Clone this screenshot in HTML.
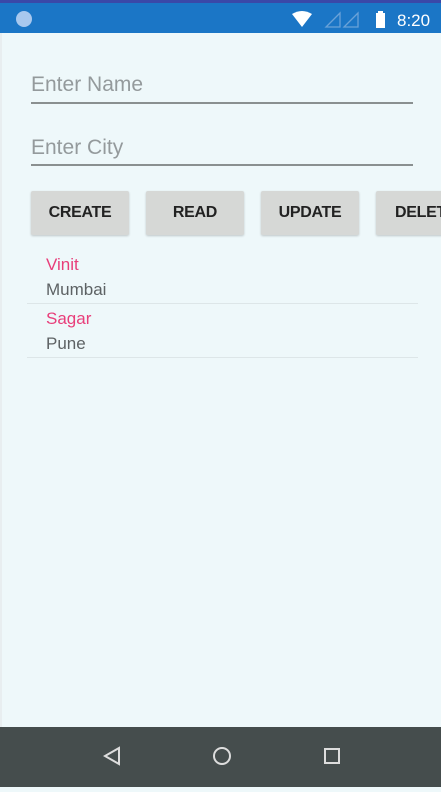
<!DOCTYPE html>
<html><head><style>
body{margin:0;width:441px;height:787px;overflow:hidden;background:#eef8fa;font-family:"Liberation Sans",sans-serif;position:relative}
.sb{position:absolute;left:0;top:0;width:441px;height:33px;background:#1b76c6;border-top:3px solid #3a48a8;box-sizing:border-box}
.ls{position:absolute;left:0;top:33px;width:2px;height:694px;background:#e8eef0}
.in{position:absolute;left:31px;width:382px;border-bottom:2px solid #8a9090;color:#949a9c;font-size:21px}
.btn{position:absolute;top:191px;width:98px;height:44px;background:#d6d8d6;border-radius:2px;box-shadow:0 1px 2px rgba(0,0,0,.2);font-size:16px;font-weight:bold;color:#222;text-align:center;line-height:44px;letter-spacing:-0.3px}
.n{position:absolute;left:46px;font-size:17px;color:#e83e7a}
.c{position:absolute;left:46px;font-size:17px;color:#5d6264}
.hr{position:absolute;left:27px;width:391px;height:1px;background:#dde6e8}
.nav{position:absolute;left:0;top:727px;width:441px;height:60px;background:#454d4d}
</style></head><body>
<div class="sb">
<div style="position:absolute;left:16px;top:8px;width:16px;height:16px;border-radius:50%;background:#a8c8ee"></div>
<svg style="position:absolute;left:290px;top:6px" width="100" height="22">
<path d="M2 5 Q12 -1 22 5 L12 18 Z" fill="#fff"/>
<path d="M50 4 L50 18 L36 18 Z" fill="none" stroke="#6aa2d8" stroke-width="1.3"/>
<path d="M68 4 L68 18 L54 18 Z" fill="none" stroke="#6aa2d8" stroke-width="1.3"/>
<rect x="86" y="4" width="9" height="15" fill="#fff"/>
<rect x="88" y="2" width="5" height="3" fill="#fff"/>
</svg>
<div style="position:absolute;left:397px;top:8px;color:#fff;font-size:17px">8:20</div>
</div>
<div class="ls"></div>
<div class="in" style="top:73px;height:29px">Enter Name</div>
<div class="in" style="top:136px;height:28px">Enter City</div>
<div class="btn" style="left:31px">CREATE</div>
<div class="btn" style="left:146px">READ</div>
<div class="btn" style="left:261px">UPDATE</div>
<div class="btn" style="left:376px;text-align:left;padding-left:19px;box-sizing:border-box">DELETE</div>
<div class="n" style="top:255px">Vinit</div>
<div class="c" style="top:280px">Mumbai</div>
<div class="hr" style="top:303px"></div>
<div class="n" style="top:309px">Sagar</div>
<div class="c" style="top:334px">Pune</div>
<div class="hr" style="top:357px"></div>
<div class="nav">
<svg width="441" height="60">
<path d="M119 21 L119 37 L105 29 Z" fill="none" stroke="#ddd" stroke-width="2"/>
<circle cx="222" cy="29" r="8" fill="none" stroke="#ddd" stroke-width="2"/>
<rect x="325" y="22" width="14" height="14" fill="none" stroke="#ddd" stroke-width="2"/>
</svg>
</div>
</body></html>
